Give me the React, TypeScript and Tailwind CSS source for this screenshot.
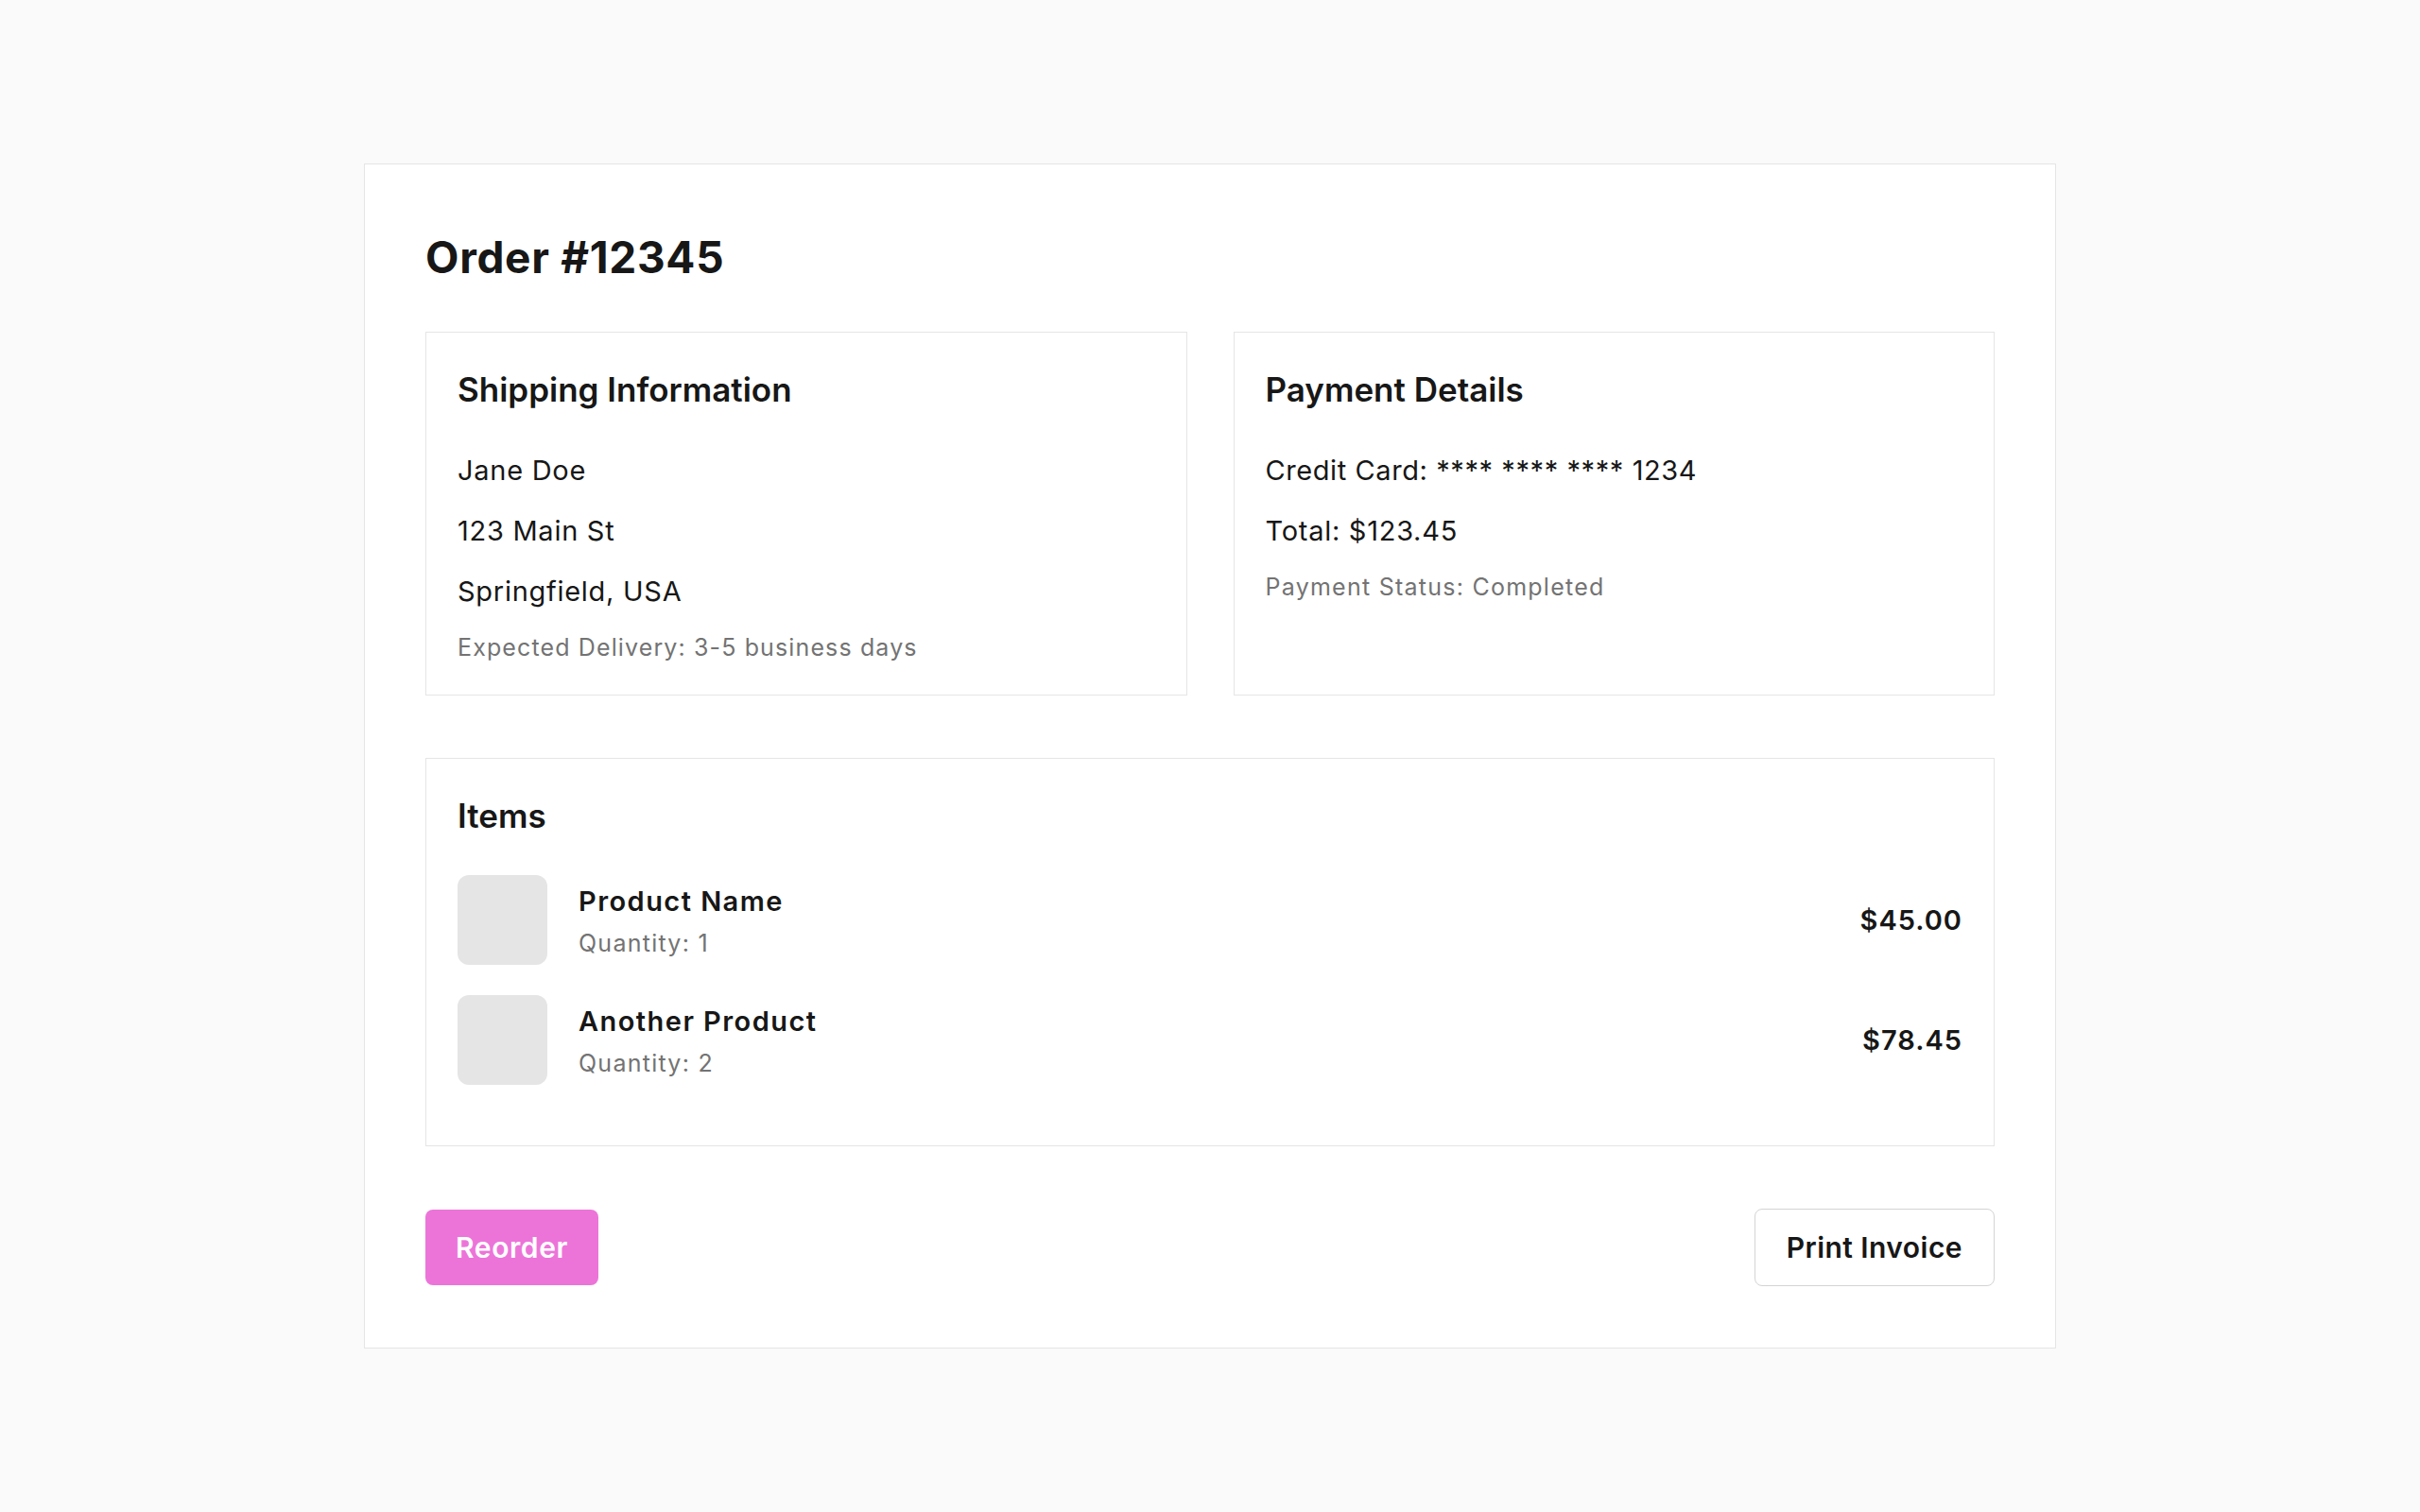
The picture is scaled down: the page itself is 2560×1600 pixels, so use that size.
import React from 'react';

const items = [
  { name: 'Product Name', qty: 1, price: '$45.00' },
  { name: 'Another Product', qty: 2, price: '$78.45' },
];

function Section({ title, children }: { title: string; children: React.ReactNode }) {
  return (
    <section className="border border-[#e5e5e5] bg-white px-[33px] pt-[36px] pb-[32px]">
      <h2 className="mb-[38px] text-[35px] font-semibold leading-[49px] text-[#171717]">{title}</h2>
      {children}
    </section>
  );
}

export default function App() {
  return (
    <div
      className="flex min-h-screen items-center justify-center bg-[#fafafa] text-[#171717]"
      style={{ fontFamily: 'Inter, "Noto Sans", sans-serif' }}
    >
      <div className="w-[1790px] border border-[#e5e5e5] bg-white px-[64px] py-[65px]">
        <h1 className="mb-[46px] text-[46px] font-bold leading-[66px] tracking-[0.015em]">Order #12345</h1>

        {/* Shipping + payment */}
        <div className="grid grid-cols-2 gap-[49px]">
          <Section title="Shipping Information">
            <p className="mb-[18px] text-[29px] leading-[46px] tracking-[0.025em]">Jane Doe</p>
            <p className="mb-[18px] text-[29px] leading-[46px] tracking-[0.025em]">123 Main St</p>
            <p className="mb-[18px] text-[29px] leading-[46px] tracking-[0.025em]">Springfield, USA</p>
            <p className="text-[25px] leading-[36px] tracking-[0.045em] text-[#737373]">
              Expected Delivery: 3-5 business days
            </p>
          </Section>
          <Section title="Payment Details">
            <p className="mb-[18px] text-[29px] leading-[46px] tracking-[0.02em]">Credit Card: **** **** **** 1234</p>
            <p className="mb-[18px] text-[29px] leading-[46px] tracking-[0.025em]">Total: $123.45</p>
            <p className="text-[25px] leading-[36px] tracking-[0.05em] text-[#737373]">Payment Status: Completed</p>
          </Section>
        </div>

        {/* Items */}
        <div className="mt-[66px]">
          <Section title="Items">
            {items.map((item) => (
              <div key={item.name} className="mb-[32px] flex items-center justify-between">
                <div className="flex items-center gap-[33px]">
                  <div className="h-[95px] w-[95px] rounded-[12px] bg-[#e5e5e5]" />
                  <div className="pt-[1px]">
                    <p className="text-[29px] font-semibold leading-[44px] tracking-[0.05em]">{item.name}</p>
                    <p className="mt-[4px] text-[25px] leading-[36px] tracking-[0.05em] text-[#737373]">
                      Quantity: {item.qty}
                    </p>
                  </div>
                </div>
                <span className="pt-[1px] text-[29px] font-semibold leading-[44px] tracking-[0.035em]">{item.price}</span>
              </div>
            ))}
          </Section>
        </div>

        {/* Actions */}
        <div className="mt-[66px] flex items-center justify-between">
          <button className="rounded-[8px] bg-[#ec74d9] px-[32px] py-[18px] text-[30px] font-semibold leading-[44px] tracking-[0.02em] text-white">
            Reorder
          </button>
          <button className="rounded-[8px] border border-[#d4d4d4] bg-white px-[33px] py-[18px] text-[30px] font-semibold leading-[44px] tracking-[0.015em] text-[#171717]">
            Print Invoice
          </button>
        </div>
      </div>
    </div>
  );
}
